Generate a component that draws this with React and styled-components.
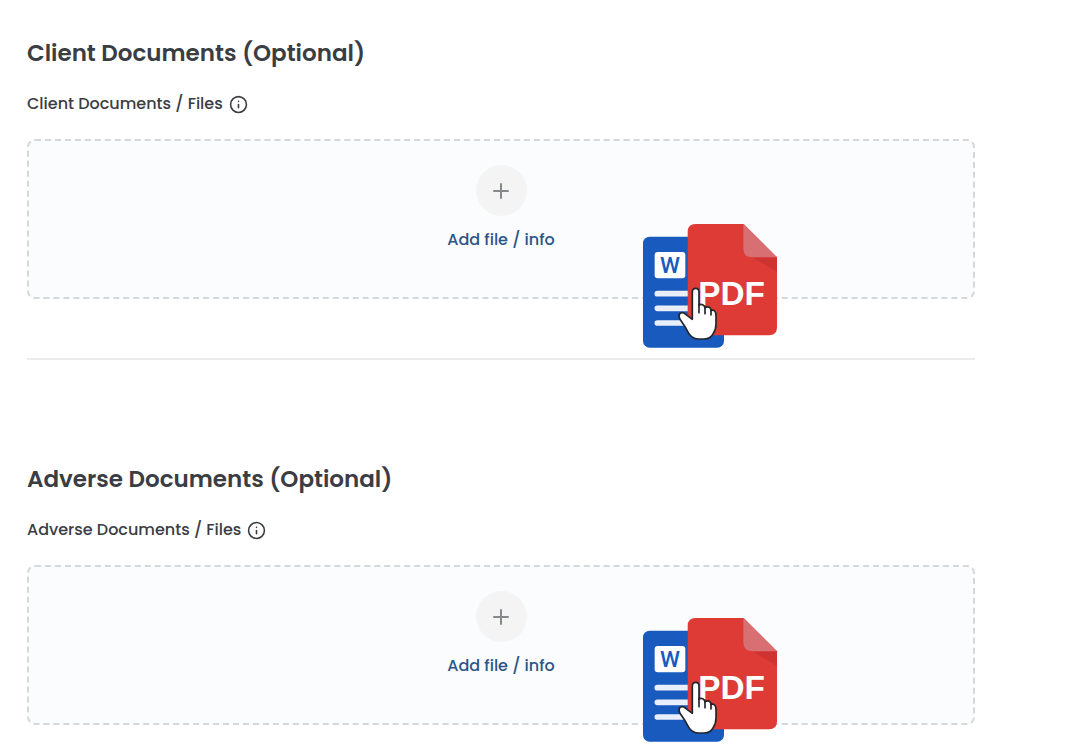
import React from "react";
import styled, { createGlobalStyle } from "styled-components";
import { Info, Plus } from "lucide-react";

const GlobalStyle = createGlobalStyle`
    * {
        box-sizing: border-box;
    }

    body {
        margin: 0;
        background: #ffffff;
        color: #3b3d44;
        font-family: Poppins, Inter, "Liberation Sans", sans-serif;
    }
`;

const Page = styled.main`
    padding: 37px 93px 19px 27px;
`;

const Section = styled.section`
    & + & {
        margin-top: 59px;
        padding-top: 103px;
        border-top: 2px solid #ececee;
    }
`;

const Title = styled.h2`
    margin: 0 0 23px;
    font-size: 23px;
    line-height: 32px;
    font-weight: 600;
`;

const Label = styled.div`
    display: flex;
    align-items: center;
    gap: 6px;
    margin-bottom: 23px;
    font-size: 16px;
    line-height: 24px;
    font-weight: 500;
`;

const DropZone = styled.div`
    position: relative;
    display: flex;
    justify-content: center;
    padding: 24px 20px 45px;
    border: 2px dashed #d6d7d8;
    border-radius: 8px;
    background: #fafcfe;
`;

const AddButton = styled.button`
    display: flex;
    flex-direction: column;
    align-items: center;
    gap: 12px;
    padding: 0;
    border: none;
    background: none;
    color: #2d5487;
    font-family: inherit;
    font-size: 16px;
    line-height: 24px;
    font-weight: 500;
    cursor: pointer;
`;

const PlusCircle = styled.span`
    display: flex;
    align-items: center;
    justify-content: center;
    width: 51px;
    height: 51px;
    border-radius: 50%;
    background: #f4f4f4;
    color: #87888c;
`;

/* Files being dragged over the drop zone */
const DraggedFiles = styled.svg`
    position: absolute;
    top: ${(props) => props.$top}px;
    left: 65%;
    width: 136px;
    height: 126px;
    pointer-events: none;
`;

const FilesDrawing = ({ top }) => (
    <DraggedFiles $top={top} viewBox="38 25 408 378" aria-hidden="true">
        {/* Word file */}
        <rect x="38" y="66" width="243" height="333" rx="20" fill="#185abd" />
        <rect x="73" y="112" width="92" height="79" rx="9" fill="#ffffff" />
        <text
            x="119"
            y="176"
            textAnchor="middle"
            fontFamily="Roboto, sans-serif"
            fontSize="68"
            fontWeight="500"
            fill="#185abd"
        >
            W
        </text>
        <path
            d="M81 237H200M81 281H200M81 325H200"
            stroke="#e9effa"
            strokeWidth="17"
            strokeLinecap="round"
        />

        {/* PDF file */}
        <path
            d="M196 28H340L440 128V338Q440 362 416 362H196Q172 362 172 338V52Q172 28 196 28Z"
            fill="#de3a36"
        />
        <path d="M366 128H440V172Z" fill="#cf3331" />
        <path d="M339 28L440 128H366Q339 128 339 101Z" fill="#d86f72" />
        <text
            x="304"
            y="271"
            textAnchor="middle"
            fontFamily="'Liberation Sans', sans-serif"
            fontSize="100"
            fontWeight="700"
            fill="#ffffff"
        >
            PDF
        </text>

        {/* Hand pointer */}
        <path
            d="M186 314V232Q186 221 196 221Q206 221 206 232V272Q210 267 217 270Q223 273 224 280Q230 274 237 278Q242 281 242 288Q248 284 253 289Q257 293 257 303V327Q257 345 249 356Q242 372 221 373H203Q184 372 174 354Q165 336 149 314Q143 304 149 296Q157 291 166 299Z"
            fill="#ffffff"
            stroke="#23252b"
            strokeWidth="5"
            strokeLinejoin="round"
        />
        <path
            d="M206 270V294M224 279V297M242 287V301"
            stroke="#23252b"
            strokeWidth="5"
            strokeLinecap="round"
        />
    </DraggedFiles>
);

const DocumentSection = ({ title, label, filesTop }) => (
    <Section>
        <Title>{title}</Title>
        <Label>
            {label}
            <Info size={19} strokeWidth={2} />
        </Label>
        <DropZone>
            <AddButton type="button">
                <PlusCircle>
                    <Plus size={24} strokeWidth={2} />
                </PlusCircle>
                Add file / info
            </AddButton>
            <FilesDrawing top={filesTop} />
        </DropZone>
    </Section>
);

const App = () => (
    <>
        <GlobalStyle />
        <Page>
            <DocumentSection
                title="Client Documents (Optional)"
                label="Client Documents / Files"
                filesTop={82}
            />
            <DocumentSection
                title="Adverse Documents (Optional)"
                label="Adverse Documents / Files"
                filesTop={50}
            />
        </Page>
    </>
);

export default App;
